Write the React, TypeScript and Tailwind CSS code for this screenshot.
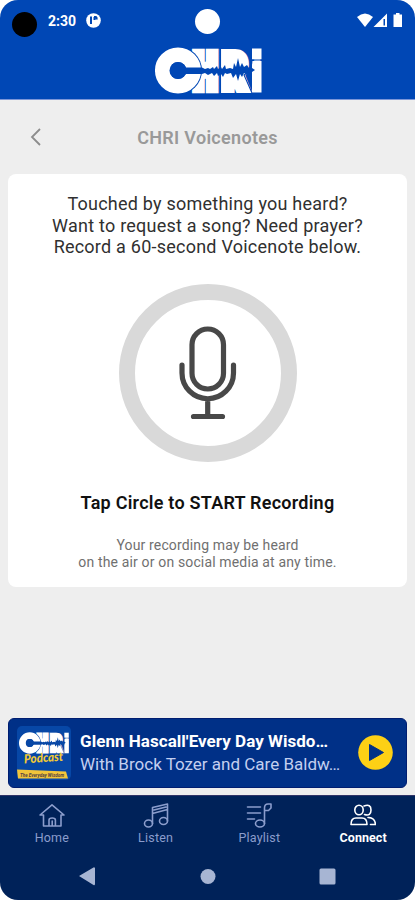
import React from "react";

interface LogoProps {
  className?: string;
  ground: string;
}

function ChriLogo({ className, ground }: LogoProps) {
  return (
    <svg viewBox="0 0 107 47" className={`overflow-visible ${className}`} fontFamily="Roboto, sans-serif" fontWeight="900" fill="#fff">
      <g stroke="#fff">
        <text transform="translate(38.700 40.700) scale(0.68 1)" fontSize="48" strokeWidth="10.500">H</text>
        <text transform="translate(67 40.700) scale(0.79 1)" fontSize="48" strokeWidth="10">R</text>
        <text transform="translate(98.800 43) scale(0.5 0.9)" fontSize="50" strokeWidth="3">i</text>
      </g>
      <rect x="97" y="1.500" width="9.500" height="11" />
      <rect x="97" y="14" width="9.500" height="31.500" />
      <circle cx="23" cy="23.500" r="24" fill={ground} />
      <text transform="translate(5.500 41.300) scale(1.050 1)" fontSize="50">C</text>
      <circle cx="23" cy="23.500" r="15.800" fill="none" stroke="#fff" strokeWidth="14.500" />
      <circle cx="23" cy="23.500" r="8.500" fill={ground} />
      <path
        d="M23 20.500h24l3 1.500 3-1 2 1 3-2 1 2 3-3 1 3 3-2 1 2 3-4 1 4 4-1 3 1 1-6 2 4 2-9 2 9 2-4 2 4 3-2 2 3 3-2v2l3 2-3 2v2l-3-2-2 3-3-2-2 4-2-3-2 7-2-7-3 4-2-5-4 1-2-1-2 4-2-3-3 2-1-3-3 3-2-3-4 2-3-2-3 1H23z"
        fill={ground}
      />
      <path d="M65.500 1v45M90 1q6 5 6 12h11M97 13q0 7-5 13l-3 2 8 18" fill="none" stroke={ground} strokeWidth="1.100" />
    </svg>
  );
}

function StatusBar() {
  return (
    <div className="flex h-[43px] items-center px-3">
      <span className="mt-[6px] h-[25px] w-[25px] rounded-full bg-black" />
      <span className="ml-[11px] w-[28px] text-[14px] font-bold text-white">2:30</span>
      <svg className="mt-[-2px] ml-[10px] h-[15px] w-[15px]" viewBox="0 0 15 15">
        <circle cx="7.500" cy="7.500" r="7.300" fill="#fff" />
        <path d="M5 3.500v7.500M8 4h1.500q1.500 0 1 2.500M8.500 4v3" fill="none" stroke="#0047b5" strokeWidth="2" />
      </svg>
      <span className="ml-[94px] h-[25px] w-[25px] rounded-full bg-white" />
      <svg className="ml-auto mt-[-3px] h-[15px] w-[46px]" viewBox="0 0 46 15" fill="#fff">
        <path d="M0 4Q8-3 16 4L8 14z" />
        <path d="M16.500 14L30 .5V14zM26.500 6v6.500H28V6z" fillRule="evenodd" />
        <path d="M36.500 1.500H39V0h3.500v1.500H45V14h-8.500z" />
      </svg>
    </div>
  );
}

function MicIcon() {
  return (
    <svg className="h-[94px] w-[60px]" viewBox="0 0 60 94" fill="none" stroke="#484848" strokeWidth="5.200" strokeLinecap="round">
      <rect x="14" y="3" width="31.500" height="60" rx="15.750" />
      <path d="M4 39v8a25.700 25.700 0 0 0 51.500 0v-8M29.700 73v17M15.500 90.500h29" />
    </svg>
  );
}

function MiniPlayer() {
  return (
    <div className="mx-2 flex h-[70px] items-center rounded-[6px] border border-[#001d70] bg-[#003087] pl-2 pr-[13px]">
      <div className="flex h-[54px] w-[54px] shrink-0 flex-col items-center rounded-[5px] bg-[#0747a6] pt-[6px]">
        <ChriLogo className="h-[22px] w-[50px]" ground="#0747a6" />
        <svg className="mt-[-4px] h-[30px] w-[54px] shrink-0 overflow-visible" viewBox="0 0 54 30">
          <text x="7" y="12" fontFamily="Lato, sans-serif" fontStyle="italic" fontWeight="900" fontSize="12.500" fill="#f2ca35" textLength="39" lengthAdjust="spacingAndGlyphs" transform="rotate(-4 27 8)">Podcast</text>
          <path d="M0 19.500l49 2 2 7H1z" fill="#f2c53a" />
          <text x="3" y="26.500" fontFamily="Roboto, sans-serif" fontStyle="italic" fontWeight="700" fontSize="5" fill="#533f42" textLength="44" lengthAdjust="spacingAndGlyphs">The Everyday Wisdom</text>
        </svg>
      </div>
      <div className="ml-[9px] w-[264px] whitespace-nowrap">
        <p className="text-[17px] font-bold leading-[23px] tracking-[0.040px] text-white">Glenn Hascall'Every Day Wisdo…</p>
        <p className="text-[17px] leading-[23px] text-[#c3cff0]">With Brock Tozer and Care Baldw…</p>
      </div>
      <svg className="mt-[-2px] ml-auto h-[35px] w-[35px] shrink-0" viewBox="0 0 35 35">
        <circle cx="17.500" cy="17.500" r="17.300" fill="#fdd015" />
        <path d="M11.500 9.500v16l14-8z" fill="#003087" stroke="#003087" strokeLinejoin="round" />
      </svg>
    </div>
  );
}

const tabs = [
  {
    label: "Home",
    icon: <path d="M1 12L13 1.800 25 12h-3v11H4.500V12zM10 23v-6q0-2 3.200-2t3.200 2v6M13.200 18v5" />,
  },
  {
    label: "Listen",
    icon: (
      <>
        <ellipse cx="5.500" cy="20.500" rx="4" ry="3.500" />
        <ellipse cx="20.500" cy="18" rx="4" ry="3.500" />
        <path d="M9.500 20.500V4.500l15-3.500v17M9.500 10.500l15-4M11 7l12-3" />
      </>
    ),
  },
  {
    label: "Playlist",
    icon: (
      <>
        <path d="M1.500 4h13M1.500 10h13M1.500 16h7M18.500 20.500V5q0-4 3.500-4h3v4l-2.500 2.500h-4" />
        <ellipse cx="14" cy="20.500" rx="4.500" ry="3.500" />
      </>
    ),
  },
  {
    label: "Connect",
    icon: (
      <>
        <ellipse cx="9" cy="7" rx="4.200" ry="4.800" />
        <path d="M1 21.500q0-6.500 5-6.500h6q5 0 5 6.500zM14 3q7-2.500 7 4t-6.500 4.500M18 14.500q7 0 7.500 7h-5" />
      </>
    ),
    active: true,
  },
];

function TabBar() {
  return (
    <nav className="flex h-[60px] pt-[7px]">
      {tabs.map((tab) => (
        <div
          key={tab.label}
          className={`flex flex-1 flex-col items-center ${tab.active ? "font-bold text-white" : "text-[#8b9dcc]"}`}
        >
          <svg className="h-[25px] w-[26px]" viewBox="0 0 26 25" fill="none" stroke="currentColor" strokeWidth="1.600" strokeLinejoin="round" strokeLinecap="round">
            {tab.icon}
          </svg>
          <span className={`mt-[2px] text-[12.500px] leading-[16px] ${tab.active ? "tracking-[0.050px]" : "tracking-[0.200px]"}`}>
            {tab.label}
          </span>
        </div>
      ))}
    </nav>
  );
}

export default function App() {
  return (
    <div className="h-[900px] w-[415px] bg-white font-['Roboto',sans-serif]">
      <div className="flex h-full flex-col overflow-hidden rounded-[18px] bg-[#eeeeee]">
        <header className="h-[100px] shrink-0 border-b border-[#7c96d8] bg-[#0047b5]">
          <StatusBar />
          <ChriLogo className="ml-[155px] mt-[4px] h-[47px] w-[107px]" ground="#0047b5" />
        </header>

        <div className="grid h-[74px] shrink-0 grid-cols-[60px_1fr_60px] items-center">
          <svg className="ml-[30px] h-[18px] w-[12px]" viewBox="0 0 12 18" fill="none" stroke="#8c8c8c" strokeWidth="1.800">
            <path d="M10 1L2 9l8 8" />
          </svg>
          <h1 className="text-center text-[18px] font-semibold tracking-[0.300px] text-[#999999]">CHRI Voicenotes</h1>
        </div>

        <main className="mx-2 flex h-[413px] shrink-0 flex-col items-center rounded-[8px] bg-white pt-[19px] text-center">
          <p className="whitespace-nowrap text-[18px] leading-[21.700px] tracking-[0.230px] text-[#303030]">
            Touched by something you heard?
            <br />
            Want to request a song? Need prayer?
            <br />
            Record a 60-second Voicenote below.
          </p>
          <button className="mt-[26px] flex h-[178px] w-[178px] items-center justify-center rounded-full border-[16px] border-[#d9d9d9]">
            <MicIcon />
          </button>
          <p className="mt-[29px] text-[18px] font-semibold leading-[24px] tracking-[0.240px] text-[#111111]">
            Tap Circle to START Recording
          </p>
          <p className="mt-[22px] text-[14px] leading-[16.500px] tracking-[0.150px] text-[#707070]">
            Your recording may be heard
            <br />
            on the air or on social media at any time.
          </p>
        </main>

        <div className="mt-auto">
          <MiniPlayer />
        </div>

        <footer className="mt-[7px] h-[105px] shrink-0 border-t border-[#303467] bg-[#002259]">
          <TabBar />
          <svg className="h-[40px] w-full" viewBox="0 0 415 40" fill="#a7b5d3">
            <path d="M79 20l14.500-8.500a1 1 0 0 1 1.500 1v15.500a1 1 0 0 1-1.500 1z" />
            <circle cx="208" cy="20.500" r="7.500" />
            <rect x="319.500" y="12.500" width="16" height="16" rx="1.500" />
          </svg>
        </footer>
      </div>
    </div>
  );
}
